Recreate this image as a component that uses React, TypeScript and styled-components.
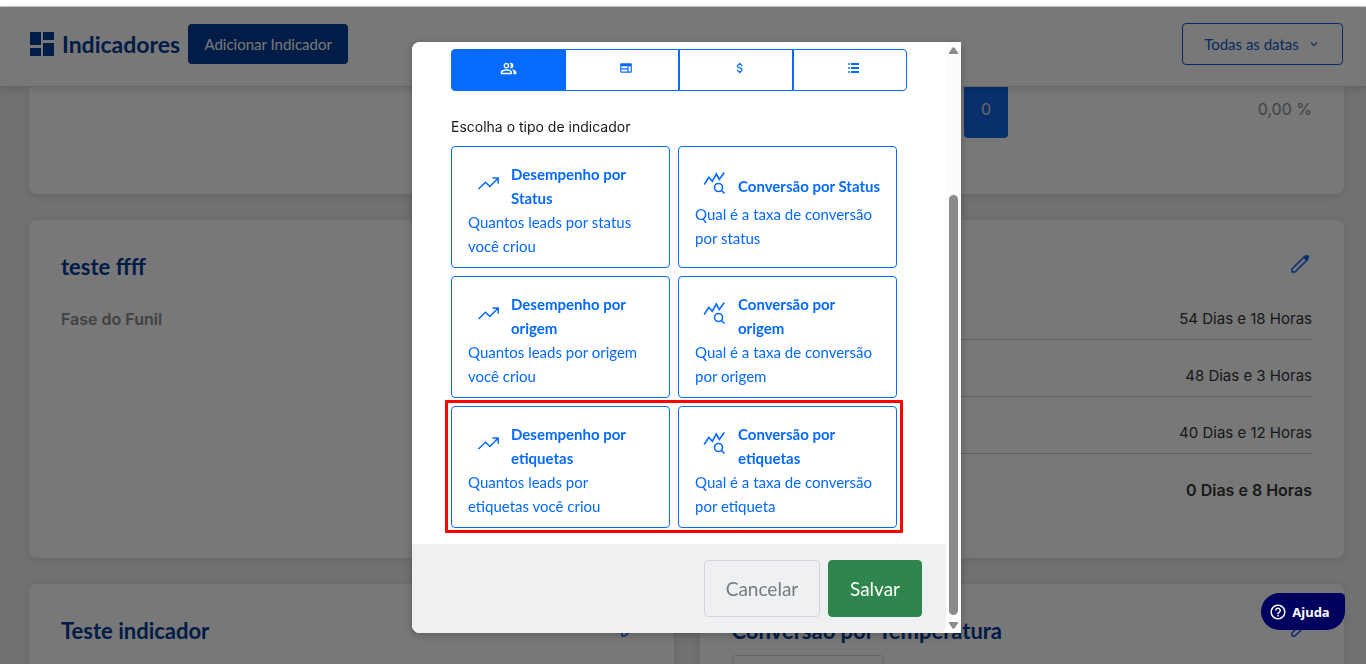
import React from 'react';
import styled, { createGlobalStyle, css } from 'styled-components';
import {
  MdOutlinePeopleAlt,
  MdOutlineWeb,
  MdAttachMoney,
  MdKeyboardArrowDown,
  MdHelpOutline,
} from 'react-icons/md';

const display = `Lato, "Noto Sans", sans-serif`;
const text = `Inter, "Open Sans", sans-serif`;

const GlobalStyle = createGlobalStyle`
  *, *::before, *::after { box-sizing: border-box; }
  body { margin: 0; background: #dfe4e2; font-family: ${text}; font-size: 15px; line-height: 24px; }
  button { font-family: ${display}; cursor: pointer; }
  h1, h2, p { margin: 0; }
`;

const Page = styled.div`
  height: 100vh;
  overflow: hidden;
  display: flex;
  flex-direction: column;
`;

const TopStrip = styled.div`
  flex: none;
  height: 7px;
  background: #fff;
  border-bottom: 1px solid #c8cacc;
`;

const Header = styled.header`
  flex: none;
  position: relative;
  z-index: 1;
  height: 80px;
  padding: 0 23px 6px 30px;
  display: flex;
  align-items: center;
  gap: 8px;
  background: #f0f0f0;
  border-bottom: 1px solid #ccc;
  box-shadow: 0 2px 8px rgba(0, 0, 0, 0.12);
`;

const PageTitle = styled.h1`
  font: 700 23px/32px ${display};
  color: #00388f;
`;

const AddButton = styled.button`
  width: 160px;
  height: 40px;
  border: 0;
  border-radius: 4px;
  background: #00388f;
  color: #f0f0f0;
  font-size: 15px;
`;

const DateButton = styled.button`
  margin-left: auto;
  width: 161px;
  height: 42px;
  display: flex;
  align-items: center;
  justify-content: center;
  gap: 8px;
  border: 1px solid #0a54c8;
  border-radius: 4px;
  background: transparent;
  color: #0d55c0;
  font-size: 15px;
`;

const Content = styled.main`
  flex: 1;
  padding: 0 22px 0 29px;
  display: flex;
  flex-direction: column;
  gap: 26px;
  overflow: hidden;
`;

const Card = styled.section<{ $continued?: boolean }>`
  flex: none;
  padding: 32px;
  border-radius: ${(p) => (p.$continued ? '0 0 8px 8px' : '8px')};
  background: #f0f0f0;
  box-shadow: 0 2px 10px rgba(0, 0, 0, 0.1);
`;

const SummaryCard = styled(Card)`
  height: 107px;
  padding-top: 0;
  display: flex;
  justify-content: flex-end;
`;

const CountBadge = styled.span`
  width: 44px;
  height: 51px;
  padding-top: 10px;
  text-align: center;
  border-radius: 0 0 4px 4px;
  background: #1060d8;
  color: #d0d0d0;
  font-size: 16px;
`;

const Percent = styled.span`
  width: 304px;
  padding-top: 10px;
  text-align: right;
  color: #808488;
  font-size: 16px;
`;

const CardHeader = styled.div`
  display: flex;
  justify-content: space-between;
  height: 31px;
`;

const CardTitle = styled.h2`
  font: 700 22px/30px ${display};
  color: #00388f;
`;

const EditButton = styled.button`
  width: 24px;
  height: 24px;
  padding: 0;
  border: 0;
  background: none;
  color: #0a5fe0;
`;

const CardRow = styled.div`
  display: grid;
  grid-template-columns: 1fr 1fr;
  gap: 26px;
`;

const PhaseCard = styled(Card)`
  padding-bottom: 48px;
`;

const PhaseColumns = styled.div`
  display: grid;
  grid-template-columns: 1fr 1fr;
`;

const PhaseLabel = styled.p`
  padding-top: 24px;
  font-size: 16px;
  font-weight: 600;
  color: #808488;
`;

const DurationList = styled.ul`
  margin: 0;
  padding: 0;
  list-style: none;
`;

const Duration = styled.li`
  padding: 24px 0 8px;
  text-align: right;
  color: #303234;
  border-bottom: 1px solid #c0c0c0;
  &:last-child {
    border-bottom: 0;
    font-size: 16px;
    font-weight: 600;
  }
`;

const FilterSelect = styled.select`
  display: block;
  width: 152px;
  height: 38px;
  margin-top: 8px;
  border: 1px solid #ccc;
  border-radius: 4px;
  background: transparent;
  appearance: none;
`;

const Overlay = styled.div`
  position: fixed;
  inset: 7px 0 0;
  z-index: 2;
  padding: 35px 0 31px 7px;
  display: flex;
  justify-content: center;
  align-items: flex-start;
  background: rgba(0, 0, 0, 0.5);
`;

const Modal = styled.div`
  width: 549px;
  display: flex;
  border-radius: 8px 0 0 8px;
  overflow: hidden;
  background: #fcfcfc;
  box-shadow: 0 2px 8px rgba(0, 0, 0, 0.25);
`;

const Dialog = styled.form`
  flex: 1;
  border-radius: 0 0 8px 0;
  overflow: hidden;
  background: #fff;
`;

const DialogBody = styled.div`
  padding: 7px 39px 16px;
`;

const Tabs = styled.div`
  display: grid;
  grid-template-columns: repeat(4, 1fr);
`;

const Tab = styled.button<{ $active?: boolean }>`
  height: 42px;
  padding: 0 0 4px;
  display: flex;
  align-items: center;
  justify-content: center;
  border: 1px solid #066afe;
  background: #fff;
  color: #066afe;
  &:first-child { border-radius: 4px 0 0 4px; }
  &:last-child { border-radius: 0 4px 4px 0; }
  ${(p) =>
    p.$active
      ? css`
          background: #066afe;
          color: #fff;
        `
      : css`
          padding-left: 8px;
        `}
`;

const Prompt = styled.p`
  margin: 24px 0 7px;
  font-size: 14px;
  color: #16181a;
`;

const Options = styled.div`
  display: flex;
  flex-direction: column;
  gap: 8px;
  padding-right: 10px;
`;

const OptionRow = styled.div<{ $marked?: boolean }>`
  position: relative;
  display: grid;
  grid-template-columns: 1fr 1fr;
  gap: 8px;
  ${(p) =>
    p.$marked &&
    css`
      &::after {
        content: '';
        position: absolute;
        inset: -6px -6px -5px;
        border: 3px solid #f00;
        border-radius: 1px;
        pointer-events: none;
      }
    `}
`;

const Option = styled.button`
  height: 122px;
  padding: 15px 0 8px 16px;
  display: flex;
  flex-direction: column;
  justify-content: flex-start;
  align-items: stretch;
  text-align: left;
  border: 1px solid #066afe;
  border-radius: 4px;
  background: #fff;
  color: #066afe;
  font-size: 15px;
  line-height: 24px;
  white-space: nowrap;
`;

const OptionHead = styled.span`
  display: flex;
  align-items: flex-start;
  gap: 3px;
`;

const OptionIcon = styled.span`
  display: flex;
  padding: 9px 8px 7px;
`;

const OptionTitle = styled.strong`
  min-height: 36px;
  display: flex;
  flex-direction: column;
  justify-content: flex-end;
  font-weight: 700;
`;

const Line = styled.span`
  display: block;
`;

const DialogFooter = styled.footer`
  padding: 16px 24px;
  display: flex;
  justify-content: flex-end;
  gap: 8px;
  background: #eef0f2;
`;

const FooterButton = styled.button<{ $primary?: boolean }>`
  height: 57px;
  width: ${(p) => (p.$primary ? '94px' : '116px')};
  padding: 0;
  border-radius: 4px;
  font-size: 19px;
  border: 1px solid ${(p) => (p.$primary ? '#2f864c' : '#d3d5d8')};
  background: ${(p) => (p.$primary ? '#2f864c' : 'transparent')};
  color: ${(p) => (p.$primary ? '#fff' : '#777b80')};
`;

const ScrollBar = styled.div`
  width: 15px;
  padding: 5px 0 4px;
  display: flex;
  flex-direction: column;
  align-items: center;
  color: #8b8b8b;
  svg { flex: none; display: block; }
`;

const Thumb = styled.div`
  width: 9px;
  flex: 1;
  margin: 140px 0 6px;
  border-radius: 5px;
  background: #8b8b8b;
`;

const HelpButton = styled.button`
  position: fixed;
  right: 21px;
  bottom: 34px;
  z-index: 3;
  width: 84px;
  height: 37px;
  padding: 0 7px 0 0;
  display: flex;
  align-items: center;
  justify-content: center;
  gap: 5px;
  border: 0;
  border-radius: 20px 5px 20px 20px;
  background: #00005f;
  color: #fff;
  && { font: 700 13px/20px "Noto Sans", sans-serif; }
`;

const DashboardIcon = () => (
  <svg width="24" height="24" viewBox="0 0 24 24" fill="#00388f" aria-hidden="true">
    <path d="M0 0h11v13H0zM0 16h11v8H0zM13 0h11v8H13zM13 11h11v13H13z" />
  </svg>
);

const PencilIcon = () => (
  <svg width="24" height="24" viewBox="0 0 24 24" aria-hidden="true">
    <path
      d="M4 20v-3L16.800 4.200l3 3L7 20z"
      fill="none"
      stroke="currentColor"
      strokeWidth="1.6"
      strokeLinejoin="round"
    />
    <path d="M15.200 5.800 18 3.200q1-.8 2 0l.9.9q.8 1 0 2L18.200 8.800z" fill="currentColor" />
  </svg>
);

const TrendIcon = () => (
  <svg width="24" height="24" viewBox="0 0 24 24" fill="none" stroke="currentColor" strokeWidth="1.500" aria-hidden="true">
    <path d="M2.500 18l7-6.800 4.300 4.300L22 7.300M16.500 7H22.200v5.700" />
  </svg>
);

const StatsIcon = () => (
  <svg width="24" height="24" viewBox="0 0 24 24" fill="none" stroke="currentColor" strokeWidth="1.600" aria-hidden="true">
    <path d="M1.200 13.500L5.800 6.300l3.500 4 4-7.300 3 5.500L21.300 1.500" />
    <circle cx="15.500" cy="16.500" r="4" />
    <path d="M18.500 19.500l3 3" />
  </svg>
);

const ListIcon = () => (
  <svg width="12" height="10" viewBox="0 0 12 10" fill="currentColor" aria-hidden="true">
    <path d="M3 0h8v2H3zM3 4h8v2H3zM3 8h8v2H3z" />
    <path d="M0 0h2v2H0zM0 4h2v2H0zM0 8h2v2H0z" opacity="0.7" />
  </svg>
);

const Triangle = ({ down = false }: { down?: boolean }) => (
  <svg width="9" height="8" viewBox="0 0 9 8" fill="currentColor" aria-hidden="true">
    <path d={down ? 'M0 1h9v1L5.500 7.500h-2L0 2z' : 'M0 7h9V6L5.500 .5h-2L0 6z'} />
  </svg>
);

const Edit = () => (
  <EditButton type="button" aria-label="Editar">
    <PencilIcon />
  </EditButton>
);

type OptionData = { kind: 'performance' | 'conversion'; title: string[]; lines: string[] };

const rows: OptionData[][] = [
  [
    { kind: 'performance', title: ['Desempenho por', 'Status'], lines: ['Quantos leads por status', 'você criou'] },
    { kind: 'conversion', title: ['Conversão por Status'], lines: ['Qual é a taxa de conversão', 'por status'] },
  ],
  [
    { kind: 'performance', title: ['Desempenho por', 'origem'], lines: ['Quantos leads por origem', 'você criou'] },
    { kind: 'conversion', title: ['Conversão por', 'origem'], lines: ['Qual é a taxa de conversão', 'por origem'] },
  ],
  [
    { kind: 'performance', title: ['Desempenho por', 'etiquetas'], lines: ['Quantos leads por', 'etiquetas você criou'] },
    { kind: 'conversion', title: ['Conversão por', 'etiquetas'], lines: ['Qual é a taxa de conversão', 'por etiqueta'] },
  ],
];

const durations = ['54 Dias e 18 Horas', '48 Dias e 3 Horas', '40 Dias e 12 Horas', '0 Dias e 8 Horas'];

const OptionCard = ({ kind, title, lines }: OptionData) => (
  <Option type="button">
    <OptionHead>
      <OptionIcon>{kind === 'performance' ? <TrendIcon /> : <StatsIcon />}</OptionIcon>
      <OptionTitle>
        {title.map((t) => (
          <Line key={t}>{t}</Line>
        ))}
      </OptionTitle>
    </OptionHead>
    {lines.map((l) => (
      <Line key={l}>{l}</Line>
    ))}
  </Option>
);

export default function App() {
  return (
    <Page>
      <GlobalStyle />
      <TopStrip />
      <Header>
        <DashboardIcon />
        <PageTitle>Indicadores</PageTitle>
        <AddButton type="button">Adicionar Indicador</AddButton>
        <DateButton type="button" aria-haspopup="menu">
          Todas as datas
          <MdKeyboardArrowDown size={14} />
        </DateButton>
      </Header>

      <Content>
        <SummaryCard $continued>
          <CountBadge>0</CountBadge>
          <Percent>0,00 %</Percent>
        </SummaryCard>

        <PhaseCard>
          <CardHeader>
            <CardTitle>teste ffff</CardTitle>
            <Edit />
          </CardHeader>
          <PhaseColumns>
            <PhaseLabel>Fase do Funil</PhaseLabel>
            <DurationList>
              {durations.map((d) => (
                <Duration key={d}>{d}</Duration>
              ))}
            </DurationList>
          </PhaseColumns>
        </PhaseCard>

        <CardRow>
          <Card>
            <CardHeader>
              <CardTitle>Teste indicador</CardTitle>
              <Edit />
            </CardHeader>
          </Card>
          <Card>
            <CardHeader>
              <CardTitle>Conversão por Temperatura</CardTitle>
              <Edit />
            </CardHeader>
            <FilterSelect aria-label="Filtro" />
          </Card>
        </CardRow>
      </Content>

      <Overlay>
        <Modal role="dialog" aria-modal="true">
          <Dialog>
            <DialogBody>
              <Tabs role="tablist">
                <Tab type="button" role="tab" aria-selected $active aria-label="Leads">
                  <MdOutlinePeopleAlt size={17} />
                </Tab>
                <Tab type="button" role="tab" aria-label="Páginas">
                  <MdOutlineWeb size={14} />
                </Tab>
                <Tab type="button" role="tab" aria-label="Vendas">
                  <MdAttachMoney size={14} />
                </Tab>
                <Tab type="button" role="tab" aria-label="Lista">
                  <ListIcon />
                </Tab>
              </Tabs>
              <Prompt>Escolha o tipo de indicador</Prompt>
              <Options>
                {rows.map((row, i) => (
                  <OptionRow key={i} $marked={i === 2}>
                    {row.map((o) => (
                      <OptionCard key={o.title.join(' ')} {...o} />
                    ))}
                  </OptionRow>
                ))}
              </Options>
            </DialogBody>
            <DialogFooter>
              <FooterButton type="button">Cancelar</FooterButton>
              <FooterButton type="submit" $primary>
                Salvar
              </FooterButton>
            </DialogFooter>
          </Dialog>
          <ScrollBar aria-hidden="true">
            <Triangle />
            <Thumb />
            <Triangle down />
          </ScrollBar>
        </Modal>
      </Overlay>

      <HelpButton type="button">
        <MdHelpOutline size={18} />
        Ajuda
      </HelpButton>
    </Page>
  );
}
